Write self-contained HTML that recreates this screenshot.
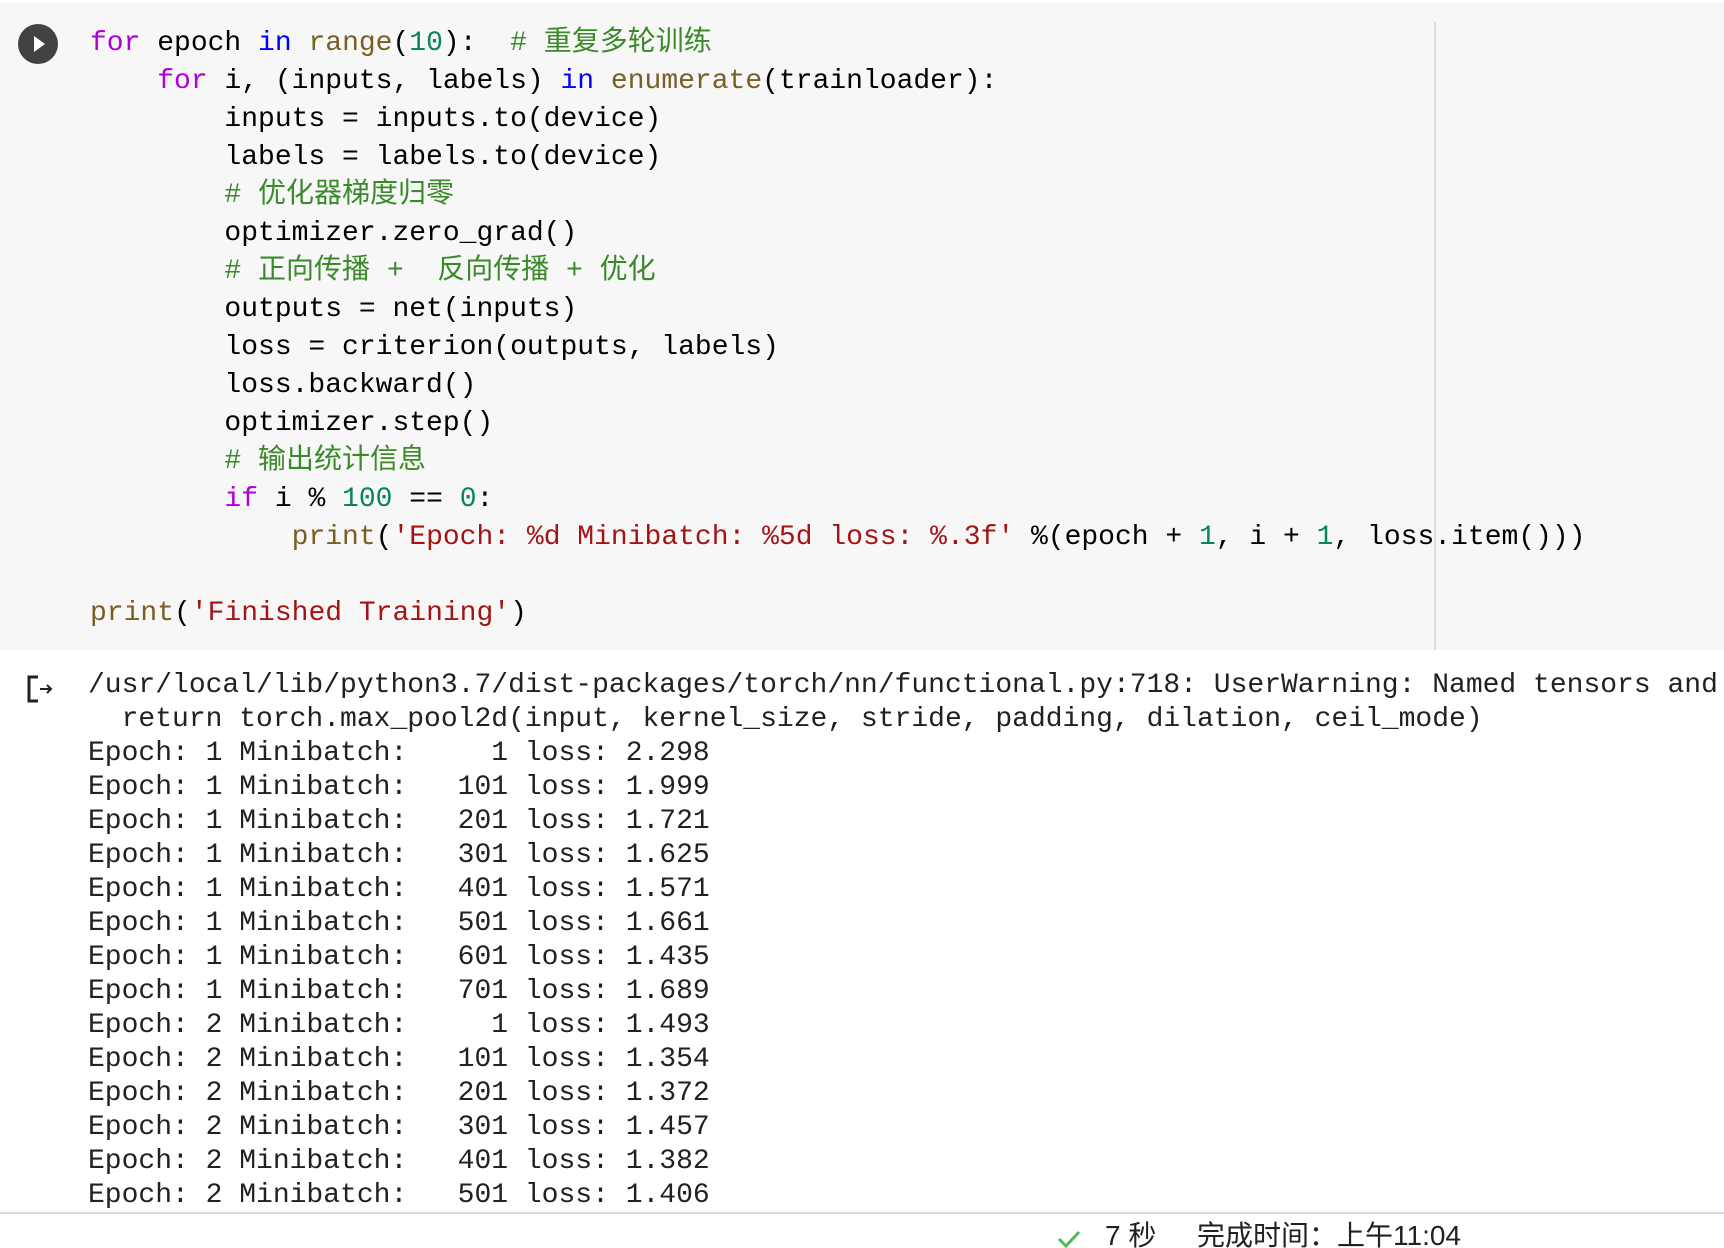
<!DOCTYPE html>
<html><head><meta charset="utf-8"><style>
html,body{margin:0;padding:0;width:1724px;height:1248px;background:#fff;overflow:hidden;position:relative}
.code{position:absolute;left:0;top:2px;width:1724px;height:648px;background:#f7f7f7}
.vl{position:absolute;left:1434px;top:22px;width:2px;height:628px;background:#dcdcdc}
pre{margin:0;font-family:"Liberation Mono","Noto Sans CJK SC",monospace;font-size:28px;color:#000;white-space:pre}
.c pre{position:absolute;left:90px;top:23px;line-height:38px}
.o{position:absolute;left:88px;top:669px;line-height:34px;font-family:"Liberation Mono","Noto Sans CJK SC",monospace;font-size:28px;color:#212121}
.k{color:#af00db}.b{color:#0000ff}.f{color:#795e26}.n{color:#098658}.m{color:#3a8a2a}.s{color:#a31515}
.run{position:absolute;left:18px;top:22px;width:40px;height:40px;border-radius:50%;background:#424242}
.run:after{content:"";position:absolute;left:16px;top:12px;border-left:11px solid #fff;border-top:8px solid transparent;border-bottom:8px solid transparent}
.line{position:absolute;left:0;top:1212px;width:1724px;height:2px;background:#dadada}
.st{position:absolute;top:1219px;font-family:"Liberation Sans","Noto Sans CJK SC",sans-serif;font-size:28px;color:#212121;line-height:34px}
</style></head><body>
<div class="code c">
<div class="run"></div>
<pre><span class="k">for</span> epoch <span class="b">in</span> <span class="f">range</span>(<span class="n">10</span>):  <span class="m"># 重复多轮训练</span>
    <span class="k">for</span> i, (inputs, labels) <span class="b">in</span> <span class="f">enumerate</span>(trainloader):
        inputs = inputs.to(device)
        labels = labels.to(device)
        <span class="m"># 优化器梯度归零</span>
        optimizer.zero_grad()
        <span class="m"># 正向传播 +  反向传播 + 优化</span>
        outputs = net(inputs)
        loss = criterion(outputs, labels)
        loss.backward()
        optimizer.step()
        <span class="m"># 输出统计信息</span>
        <span class="k">if</span> i % <span class="n">100</span> == <span class="n">0</span>:
            <span class="f">print</span>(<span class="s">'Epoch: %d Minibatch: %5d loss: %.3f'</span> %(epoch + <span class="n">1</span>, i + <span class="n">1</span>, loss.item()))

<span class="f">print</span>(<span class="s">'Finished Training'</span>)</pre>
</div>
<div class="vl"></div>
<svg style="position:absolute;left:26px;top:674px" width="30" height="30" viewBox="0 0 30 30"><path d="M12 3H3v24h9" fill="none" stroke="#212121" stroke-width="3"/><path d="M14 15h11M21 11l4 4-4 4" fill="none" stroke="#212121" stroke-width="2"/></svg>
<pre class="o">/usr/local/lib/python3.7/dist-packages/torch/nn/functional.py:718: UserWarning: Named tensors and
  return torch.max_pool2d(input, kernel_size, stride, padding, dilation, ceil_mode)
Epoch: 1 Minibatch:     1 loss: 2.298
Epoch: 1 Minibatch:   101 loss: 1.999
Epoch: 1 Minibatch:   201 loss: 1.721
Epoch: 1 Minibatch:   301 loss: 1.625
Epoch: 1 Minibatch:   401 loss: 1.571
Epoch: 1 Minibatch:   501 loss: 1.661
Epoch: 1 Minibatch:   601 loss: 1.435
Epoch: 1 Minibatch:   701 loss: 1.689
Epoch: 2 Minibatch:     1 loss: 1.493
Epoch: 2 Minibatch:   101 loss: 1.354
Epoch: 2 Minibatch:   201 loss: 1.372
Epoch: 2 Minibatch:   301 loss: 1.457
Epoch: 2 Minibatch:   401 loss: 1.382
Epoch: 2 Minibatch:   501 loss: 1.406</pre>
<div class="line"></div>
<svg style="position:absolute;left:1057px;top:1229px" width="24" height="20" viewBox="0 0 24 20"><path d="M2 10l7 7L22 3" fill="none" stroke="#4cbb5c" stroke-width="3"/></svg>
<div class="st" style="left:1105px">7 秒</div>
<div class="st" style="left:1197px">完成时间：上午11:04</div>
</body></html>
